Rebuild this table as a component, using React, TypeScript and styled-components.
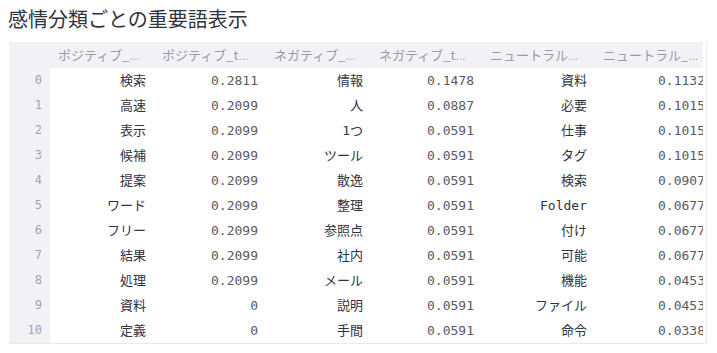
import React from "react";
import styled, { createGlobalStyle } from "styled-components";

const Global = createGlobalStyle`
  html, body { margin: 0; padding: 0; background: #ffffff; }
  body { font-family: "Noto Sans CJK JP", "Noto Sans", sans-serif; }
`;

const Page = styled.div`
  padding: 6px 8px 0 8px;
`;

const Title = styled.h2`
  margin: 0 0 10px 0;
  font-family: "Noto Sans CJK JP", "Noto Sans", sans-serif;
  font-weight: 400;
  font-size: 20px;
  line-height: 26px;
  color: #31333f;
`;

const Frame = styled.div`
  margin-left: 1px;
  width: 697px;
  border-right: 1px solid #e9e9ef;
  border-bottom: 1px solid #e9e9ef;
  background: #ffffff;
`;

const Viewport = styled.div`
  width: 694px;
  overflow: hidden;
`;

const Grid = styled.div<{ $cols: string }>`
  display: grid;
  grid-template-columns: ${(p) => p.$cols};
  width: max-content;
  font-family: "DejaVu Sans Mono", "Noto Sans CJK JP", monospace;
  font-size: 13px;
`;

const HeadCell = styled.div`
  height: 26px;
  line-height: 26px;
  background: #f2f2f6;
  color: #9b9ba6;
  padding: 0 8px;
  white-space: nowrap;
  overflow: hidden;
  font-family: "Noto Sans CJK JP", "DejaVu Sans Mono", monospace;
  font-size: 13px;
`;

const Ellipsis = styled.span`
  font-family: "DejaVu Sans", sans-serif;
  font-size: 10px;
`;

const IndexCell = styled.div`
  height: 25px;
  line-height: 25px;
  background: #f2f2f6;
  color: #a3a3ad;
  padding: 0 8px;
  text-align: right;
  font-size: 12px;
`;

const Cell = styled.div<{ $num?: boolean }>`
  height: 25px;
  line-height: 25px;
  padding: 0 8px;
  text-align: right;
  white-space: nowrap;
  overflow: hidden;
  color: ${(p) => (p.$num ? "#5a5a62" : "#31333f")};
`;

const headers = [
  "ポジティブ_",
  "ポジティブ_t",
  "ネガティブ_",
  "ネガティブ_t",
  "ニュートラル",
  "ニュートラル_",
];

const rows: [string, string, string, string, string, string][] = [
  ["検索", "0.2811", "情報", "0.1478", "資料", "0.1132"],
  ["高速", "0.2099", "人", "0.0887", "必要", "0.1015"],
  ["表示", "0.2099", "1つ", "0.0591", "仕事", "0.1015"],
  ["候補", "0.2099", "ツール", "0.0591", "タグ", "0.1015"],
  ["提案", "0.2099", "散逸", "0.0591", "検索", "0.0907"],
  ["ワード", "0.2099", "整理", "0.0591", "Folder", "0.0677"],
  ["フリー", "0.2099", "参照点", "0.0591", "付け", "0.0677"],
  ["結果", "0.2099", "社内", "0.0591", "可能", "0.0677"],
  ["処理", "0.2099", "メール", "0.0591", "機能", "0.0453"],
  ["資料", "0", "説明", "0.0591", "ファイル", "0.0453"],
  ["定義", "0", "手間", "0.0591", "命令", "0.0338"],
];

const cols = "41px 104px 112px 105px 111px 113px 118px";

export default function App() {
  return (
    <Page>
      <Global />
      <Title>感情分類ごとの重要語表示</Title>
      <Frame>
        <Viewport>
          <Grid $cols={cols}>
            <HeadCell />
            {headers.map((h) => (
              <HeadCell key={h}>
                {h}
                <Ellipsis>…</Ellipsis>
              </HeadCell>
            ))}
            {rows.map((r, i) => (
              <React.Fragment key={i}>
                <IndexCell>{i}</IndexCell>
                {r.map((v, j) => (
                  <Cell key={j} $num={j % 2 === 1}>
                    {v}
                  </Cell>
                ))}
              </React.Fragment>
            ))}
          </Grid>
        </Viewport>
      </Frame>
    </Page>
  );
}
